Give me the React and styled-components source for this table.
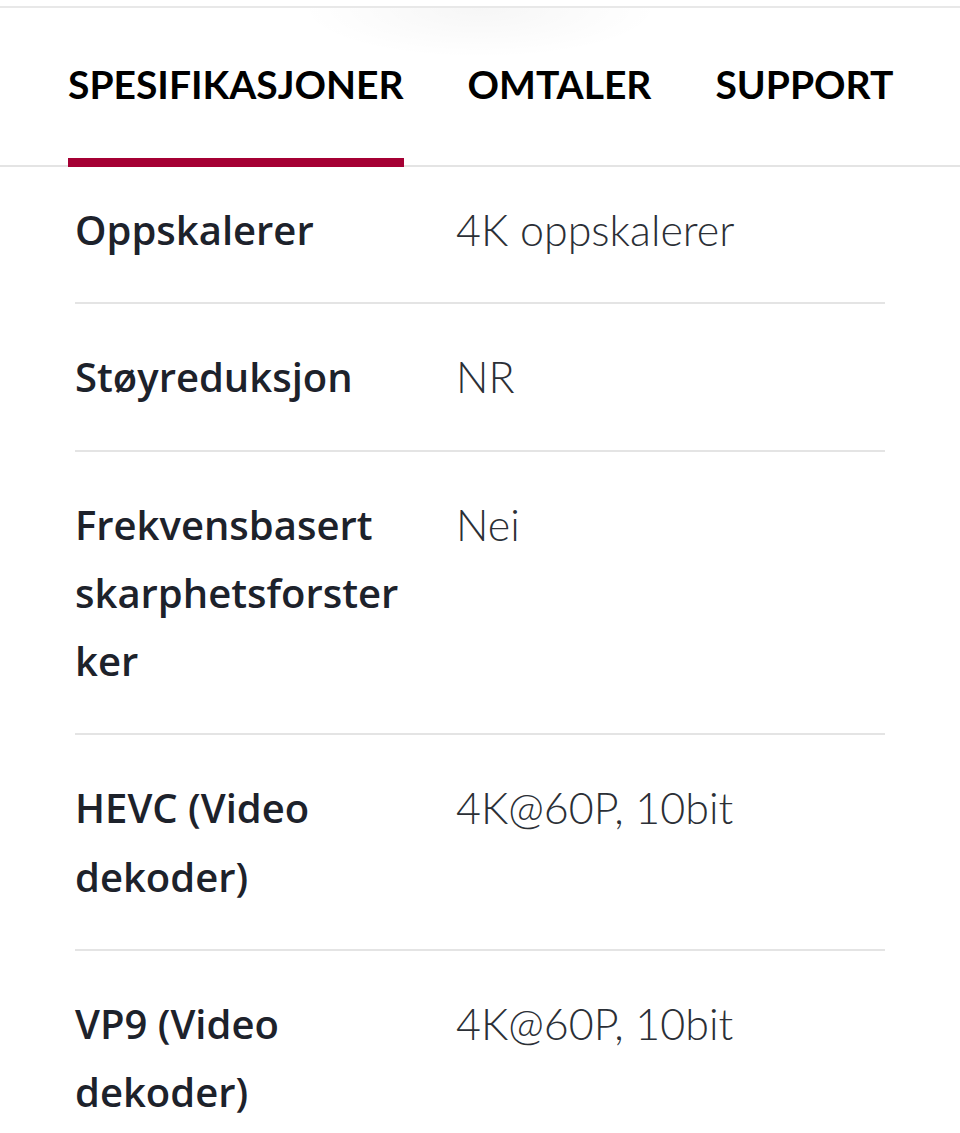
import React from 'react';
import styled, { createGlobalStyle } from 'styled-components';

const GlobalStyle = createGlobalStyle`
  html, body {
    margin: 0;
    padding: 0;
    background: #ffffff;
  }
  body {
    font-family: Lato, "Open Sans", sans-serif;
    -webkit-font-smoothing: antialiased;
  }
`;

const TABS = ['SPESIFIKASJONER', 'OMTALER', 'SUPPORT'];

const SPECS = [
  { label: 'Oppskalerer', value: '4K oppskalerer' },
  { label: 'Støyreduksjon', value: 'NR' },
  { label: 'Frekvensbasert skarphetsforsterker', value: 'Nei' },
  { label: 'HEVC (Video dekoder)', value: '4K@60P, 10bit' },
  { label: 'VP9 (Video dekoder)', value: '4K@60P, 10bit' },
];

function App() {
  return (
    <Page>
      <GlobalStyle />
      <TopStrip />
      <TabBar>
        {TABS.map((tab, i) => (
          <Tab key={tab} active={i === 0}>
            {tab}
          </Tab>
        ))}
      </TabBar>
      <SpecList>
        {SPECS.map((spec, i) => (
          <SpecRow key={spec.label} first={i === 0}>
            <SpecLabel>{spec.label}</SpecLabel>
            <SpecValue>{spec.value}</SpecValue>
          </SpecRow>
        ))}
      </SpecList>
    </Page>
  );
}

const Page = styled.div`
  width: 960px;
  min-height: 1133px;
  overflow: hidden;
  background: #fff;
`;

const TopStrip = styled.div`
  height: 6px;
  border-bottom: 2px solid #e8e8e8;
  position: relative;

  &::after {
    content: '';
    position: absolute;
    left: 300px;
    right: 300px;
    top: 8px;
    height: 50px;
    background: radial-gradient(ellipse 50% 100% at 50% 0%, rgba(0, 0, 0, 0.035), rgba(0, 0, 0, 0));
  }
`;

const TabBar = styled.div`
  display: flex;
  gap: 64px;
  padding: 0 68px;
  height: 159px;
  border-bottom: 2px solid #e4e4e4;
  box-sizing: border-box;
`;

const Tab = styled.div`
  display: flex;
  align-items: center;
  padding-top: 2px;
  margin-bottom: -2px;
  font-family: Lato, "Open Sans", sans-serif;
  font-weight: 700;
  font-size: 39px;
  color: #000;
  border-bottom: 9px solid ${(p) => (p.active ? '#a50034' : 'transparent')};
  box-sizing: border-box;
`;

const SpecList = styled.div`
  padding: 0 75px;
`;

const SpecRow = styled.div`
  display: grid;
  grid-template-columns: 381px 1fr;
  padding: ${(p) => (p.first ? '29px 0 38px' : '39px 0 38px')};
  border-bottom: 2px solid #e4e4e4;
`;

const SpecLabel = styled.div`
  font-family: "Open Sans", Lato, sans-serif;
  font-weight: 600;
  font-size: 40px;
  line-height: 68.3px;
  color: #1d222b;
  padding-right: 36px;
  overflow-wrap: anywhere;
`;

const SpecValue = styled.div`
  font-family: Lato, "Open Sans", sans-serif;
  font-weight: 300;
  font-size: 43px;
  line-height: 68.3px;
  color: #2b2f36;
`;

export default App;
